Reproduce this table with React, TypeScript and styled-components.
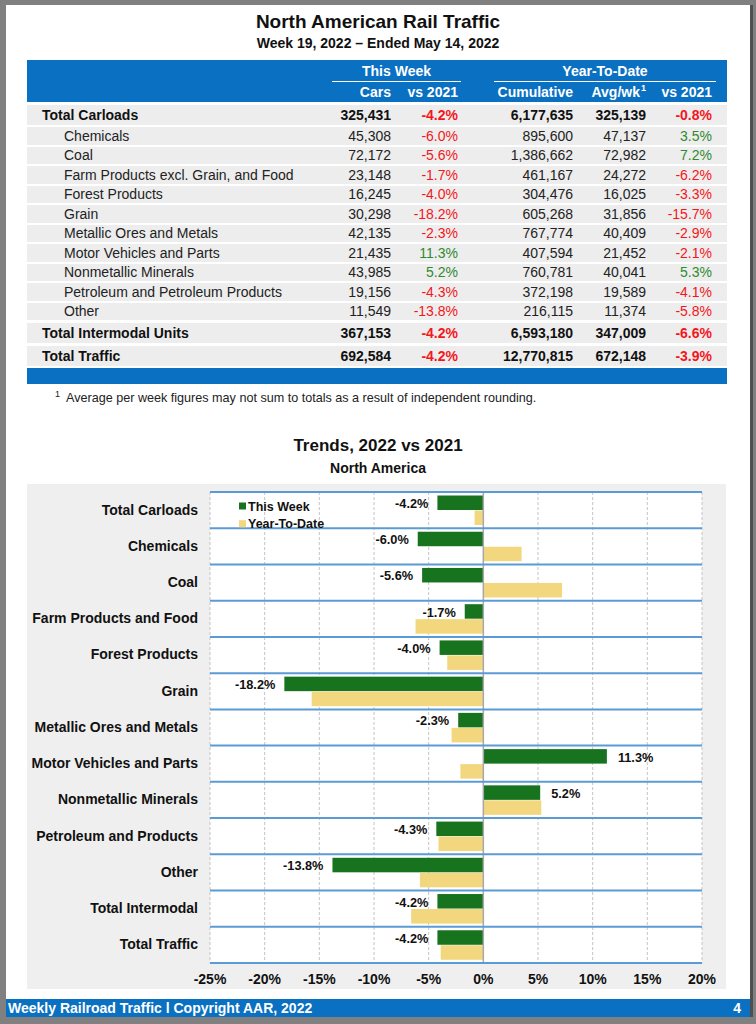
import React from 'react';
import styled, { createGlobalStyle } from 'styled-components';

const BLUE = '#0a70c2';

const GlobalStyle = createGlobalStyle`
  body {
    margin: 0;
    background: #808080;
    font-family: "Liberation Sans", Arial, Helvetica, sans-serif;
    color: #111;
  }
`;

const Frame = styled.div`
  width: 756px;
  height: 1024px;
  padding: 5px 6px 0 6px;
  box-sizing: border-box;
`;

const Sheet = styled.div`
  width: 744px;
  box-shadow: 3px 0 0 #4f4f4f;
`;

const Paper = styled.div`
  height: 994px;
  background: #fff;
  display: flex;
  flex-direction: column;
  align-items: center;
`;

const Title = styled.h1`
  margin: 6px 0 0;
  font-size: 19px;
  line-height: 22px;
  font-weight: bold;
`;

const Subtitle = styled.h2`
  margin: 1.5px 0 0;
  font-size: 14px;
  line-height: 17px;
  font-weight: bold;
`;

const Table = styled.div`
  width: 700px;
  margin: 8.5px 2px 0 0;
`;

const gridCols = `
  display: grid;
  grid-template-columns: 294px 70px 67px 115px 73px 66px;
  padding-right: 15px;
`;

const TableHead = styled.div`
  background: ${BLUE};
  height: 42px;
  padding-top: 3px;
  box-sizing: border-box;
  color: #fff;
  font-size: 14px;
  font-weight: bold;
`;

const HeadRow = styled.div`
  ${gridCols}
  & + & {
    margin-top: 2px;
  }
`;

const GroupCell = styled.div<{ $col: string; $ml: number; $mr: number }>`
  grid-column: ${p => p.$col};
  margin-left: ${p => p.$ml}px;
  margin-right: ${p => p.$mr}px;
  text-align: center;
  line-height: 17px;
  padding-bottom: 1px;
  border-bottom: 1.5px solid #fff;
`;

const HeadCell = styled.div<{ $col: number }>`
  grid-column: ${p => p.$col};
  text-align: right;
  line-height: 17px;
`;

const Sup = styled.span`
  font-size: 9px;
  position: relative;
  top: -6px;
  margin-left: 1px;
`;

const Row = styled.div<{ $total?: boolean }>`
  ${gridCols}
  background: #ededed;
  height: ${p => (p.$total ? 20 : 17.5)}px;
  margin-top: ${p => (p.$total ? 3 : 2)}px;
  align-items: center;
  font-size: 14px;
  font-weight: ${p => (p.$total ? 'bold' : 'normal')};
  color: ${p => (p.$total ? '#111' : '#222')};
`;

const Label = styled.div<{ $total?: boolean }>`
  padding-left: ${p => (p.$total ? 15 : 37)}px;
  white-space: nowrap;
`;

const Num = styled.div<{ $tone?: 'neg' | 'pos' }>`
  text-align: right;
  white-space: nowrap;
  color: ${p => (p.$tone === 'neg' ? '#f4161c' : p.$tone === 'pos' ? '#2f8a2f' : 'inherit')};
`;

const BlueRule = styled.div`
  height: 16px;
  margin-top: 2px;
  background: ${BLUE};
`;

const Footnote = styled.p`
  align-self: flex-start;
  margin: 7px 0 0 49px;
  font-size: 12.6px;
  line-height: 15px;
  color: #222;
`;

const NoteMark = styled.span`
  font-size: 9px;
  position: relative;
  top: -5px;
  margin-right: 6px;
`;

const ChartTitle = styled.h2`
  margin: 29px 0 0;
  font-size: 17px;
  line-height: 20px;
  font-weight: bold;
`;

const ChartSubtitle = styled.h3`
  margin: 4px 0 0;
  font-size: 14px;
  line-height: 17px;
  font-weight: bold;
`;

const ChartPanel = styled.div`
  width: 699px;
  height: 505px;
  margin: 6.5px 3px 0 0;
  padding-top: 8px;
  box-sizing: border-box;
  background: #efefef;
  display: grid;
  grid-template-columns: 183px 516px;
  align-items: start;
`;

const Categories = styled.div`
  display: flex;
  flex-direction: column;
`;

const Category = styled.div<{ $h: number }>`
  height: ${p => p.$h}px;
  display: flex;
  align-items: center;
  justify-content: flex-end;
  padding-right: 12px;
  font-size: 14px;
  font-weight: bold;
  white-space: nowrap;
`;

const Plot = styled.svg`
  overflow: visible;
  display: block;
  font-family: "Liberation Sans", Arial, Helvetica, sans-serif;
  font-weight: bold;
`;

const Footer = styled.div`
  height: 18px;
  background: ${BLUE};
  color: #fff;
  font-size: 14px;
  font-weight: bold;
  line-height: 18px;
  display: flex;
  justify-content: space-between;
  padding: 0 9px 0 2px;
`;

type Line = {
  name: string;
  cars: string;
  week: string;
  cum: string;
  avg: string;
  ytd: string;
  total?: boolean;
};

const lines: Line[] = [
  { name: 'Total Carloads', cars: '325,431', week: '-4.2%', cum: '6,177,635', avg: '325,139', ytd: '-0.8%', total: true },
  { name: 'Chemicals', cars: '45,308', week: '-6.0%', cum: '895,600', avg: '47,137', ytd: '3.5%' },
  { name: 'Coal', cars: '72,172', week: '-5.6%', cum: '1,386,662', avg: '72,982', ytd: '7.2%' },
  { name: 'Farm Products excl. Grain, and Food', cars: '23,148', week: '-1.7%', cum: '461,167', avg: '24,272', ytd: '-6.2%' },
  { name: 'Forest Products', cars: '16,245', week: '-4.0%', cum: '304,476', avg: '16,025', ytd: '-3.3%' },
  { name: 'Grain', cars: '30,298', week: '-18.2%', cum: '605,268', avg: '31,856', ytd: '-15.7%' },
  { name: 'Metallic Ores and Metals', cars: '42,135', week: '-2.3%', cum: '767,774', avg: '40,409', ytd: '-2.9%' },
  { name: 'Motor Vehicles and Parts', cars: '21,435', week: '11.3%', cum: '407,594', avg: '21,452', ytd: '-2.1%' },
  { name: 'Nonmetallic Minerals', cars: '43,985', week: '5.2%', cum: '760,781', avg: '40,041', ytd: '5.3%' },
  { name: 'Petroleum and Petroleum Products', cars: '19,156', week: '-4.3%', cum: '372,198', avg: '19,589', ytd: '-4.1%' },
  { name: 'Other', cars: '11,549', week: '-13.8%', cum: '216,115', avg: '11,374', ytd: '-5.8%' },
  { name: 'Total Intermodal Units', cars: '367,153', week: '-4.2%', cum: '6,593,180', avg: '347,009', ytd: '-6.6%', total: true },
  { name: 'Total Traffic', cars: '692,584', week: '-4.2%', cum: '12,770,815', avg: '672,148', ytd: '-3.9%', total: true },
];

const trends: [string, number, number][] = [
  ['Total Carloads', -4.2, -0.8],
  ['Chemicals', -6.0, 3.5],
  ['Coal', -5.6, 7.2],
  ['Farm Products and Food', -1.7, -6.2],
  ['Forest Products', -4.0, -3.3],
  ['Grain', -18.2, -15.7],
  ['Metallic Ores and Metals', -2.3, -2.9],
  ['Motor Vehicles and Parts', 11.3, -2.1],
  ['Nonmetallic Minerals', 5.2, 5.3],
  ['Petroleum and Products', -4.3, -4.1],
  ['Other', -13.8, -5.8],
  ['Total Intermodal', -4.2, -6.6],
  ['Total Traffic', -4.2, -3.9],
];

const tone = (v: string) => (v.startsWith('-') ? 'neg' : 'pos');

const PW = 492;
const PH = 471;
const ROW = PH / trends.length;
const ticks = [-25, -20, -15, -10, -5, 0, 5, 10, 15, 20];
const sx = (v: number) => ((v + 25) * PW) / 45;

const TrendChart: React.FC = () => (
  <ChartPanel>
    <Categories>
      {trends.map(([name]) => (
        <Category key={name} $h={ROW}>{name}</Category>
      ))}
    </Categories>
    <Plot width={516} height={497} viewBox="0 0 516 497">
      <rect x={0} y={0} width={PW} height={PH} fill="#fff" />
      {ticks.map(t =>
        t === 0 ? null : (
          <line key={t} x1={sx(t)} x2={sx(t)} y1={0} y2={PH} stroke="#c4c4c4" strokeWidth={1} strokeDasharray="3 2" />
        )
      )}
      {trends.map(([name, week, ytd], i) => {
        const top = i * ROW;
        const wx = Math.min(sx(week), sx(0));
        const yx = Math.min(sx(ytd), sx(0));
        return (
          <g key={name}>
            <rect x={wx} y={top + 3.5} width={Math.abs(sx(week) - sx(0))} height={14.5} fill="#18731f" />
            <rect x={yx} y={top + 18.5} width={Math.abs(sx(ytd) - sx(0))} height={14.5} fill="#f2d77e" />
            <text
              x={week < 0 ? sx(week) - 9 : sx(week) + 11}
              y={top + 16}
              fontSize={12.75}
              textAnchor={week < 0 ? 'end' : 'start'}
              fill="#111"
            >
              {`${week.toFixed(1)}%`}
            </text>
          </g>
        );
      })}
      <line x1={sx(0)} x2={sx(0)} y1={0} y2={PH} stroke="#a8a8a8" strokeWidth={1.5} />
      {trends.map((_, i) => (
        <line key={i} x1={0} x2={PW} y1={i * ROW} y2={i * ROW} stroke="#5b9bd5" strokeWidth={2} />
      ))}
      <line x1={0} x2={PW} y1={PH} y2={PH} stroke="#5b9bd5" strokeWidth={2} />
      <rect x={29} y={10.5} width={7} height={7} fill="#18731f" />
      <text x={38} y={18.5} fontSize={12.5} fill="#111">This Week</text>
      <rect x={29} y={28.2} width={7} height={7} fill="#f2d77e" />
      <text x={38} y={36} fontSize={12.5} fill="#111">Year-To-Date</text>
      {ticks.map(t => (
        <text key={t} x={sx(t)} y={492} fontSize={14} textAnchor="middle" fill="#111">
          {t}%
        </text>
      ))}
    </Plot>
  </ChartPanel>
);

export default function App() {
  return (
    <Frame>
      <GlobalStyle />
      <Sheet>
        <Paper>
          <Title>North American Rail Traffic</Title>
          <Subtitle>Week 19, 2022 – Ended May 14, 2022</Subtitle>
          <Table>
            <TableHead>
              <HeadRow>
                <GroupCell $col="2 / 4" $ml={11} $mr={-3}>This Week</GroupCell>
                <GroupCell $col="4 / 7" $ml={36} $mr={-4}>Year-To-Date</GroupCell>
              </HeadRow>
              <HeadRow>
                <HeadCell $col={2}>Cars</HeadCell>
                <HeadCell $col={3}>vs 2021</HeadCell>
                <HeadCell $col={4}>Cumulative</HeadCell>
                <HeadCell $col={5}>
                  Avg/wk<Sup>1</Sup>
                </HeadCell>
                <HeadCell $col={6}>vs 2021</HeadCell>
              </HeadRow>
            </TableHead>
            {lines.map(l => (
              <Row key={l.name} $total={l.total}>
                <Label $total={l.total}>{l.name}</Label>
                <Num>{l.cars}</Num>
                <Num $tone={tone(l.week)}>{l.week}</Num>
                <Num>{l.cum}</Num>
                <Num>{l.avg}</Num>
                <Num $tone={tone(l.ytd)}>{l.ytd}</Num>
              </Row>
            ))}
            <BlueRule />
          </Table>
          <Footnote>
            <NoteMark>1</NoteMark>
            Average per week figures may not sum to totals as a result of independent rounding.
          </Footnote>
          <ChartTitle>Trends, 2022 vs 2021</ChartTitle>
          <ChartSubtitle>North America</ChartSubtitle>
          <TrendChart />
        </Paper>
        <Footer>
          <span>Weekly Railroad Traffic l Copyright AAR, 2022</span>
          <span>4</span>
        </Footer>
      </Sheet>
    </Frame>
  );
}
